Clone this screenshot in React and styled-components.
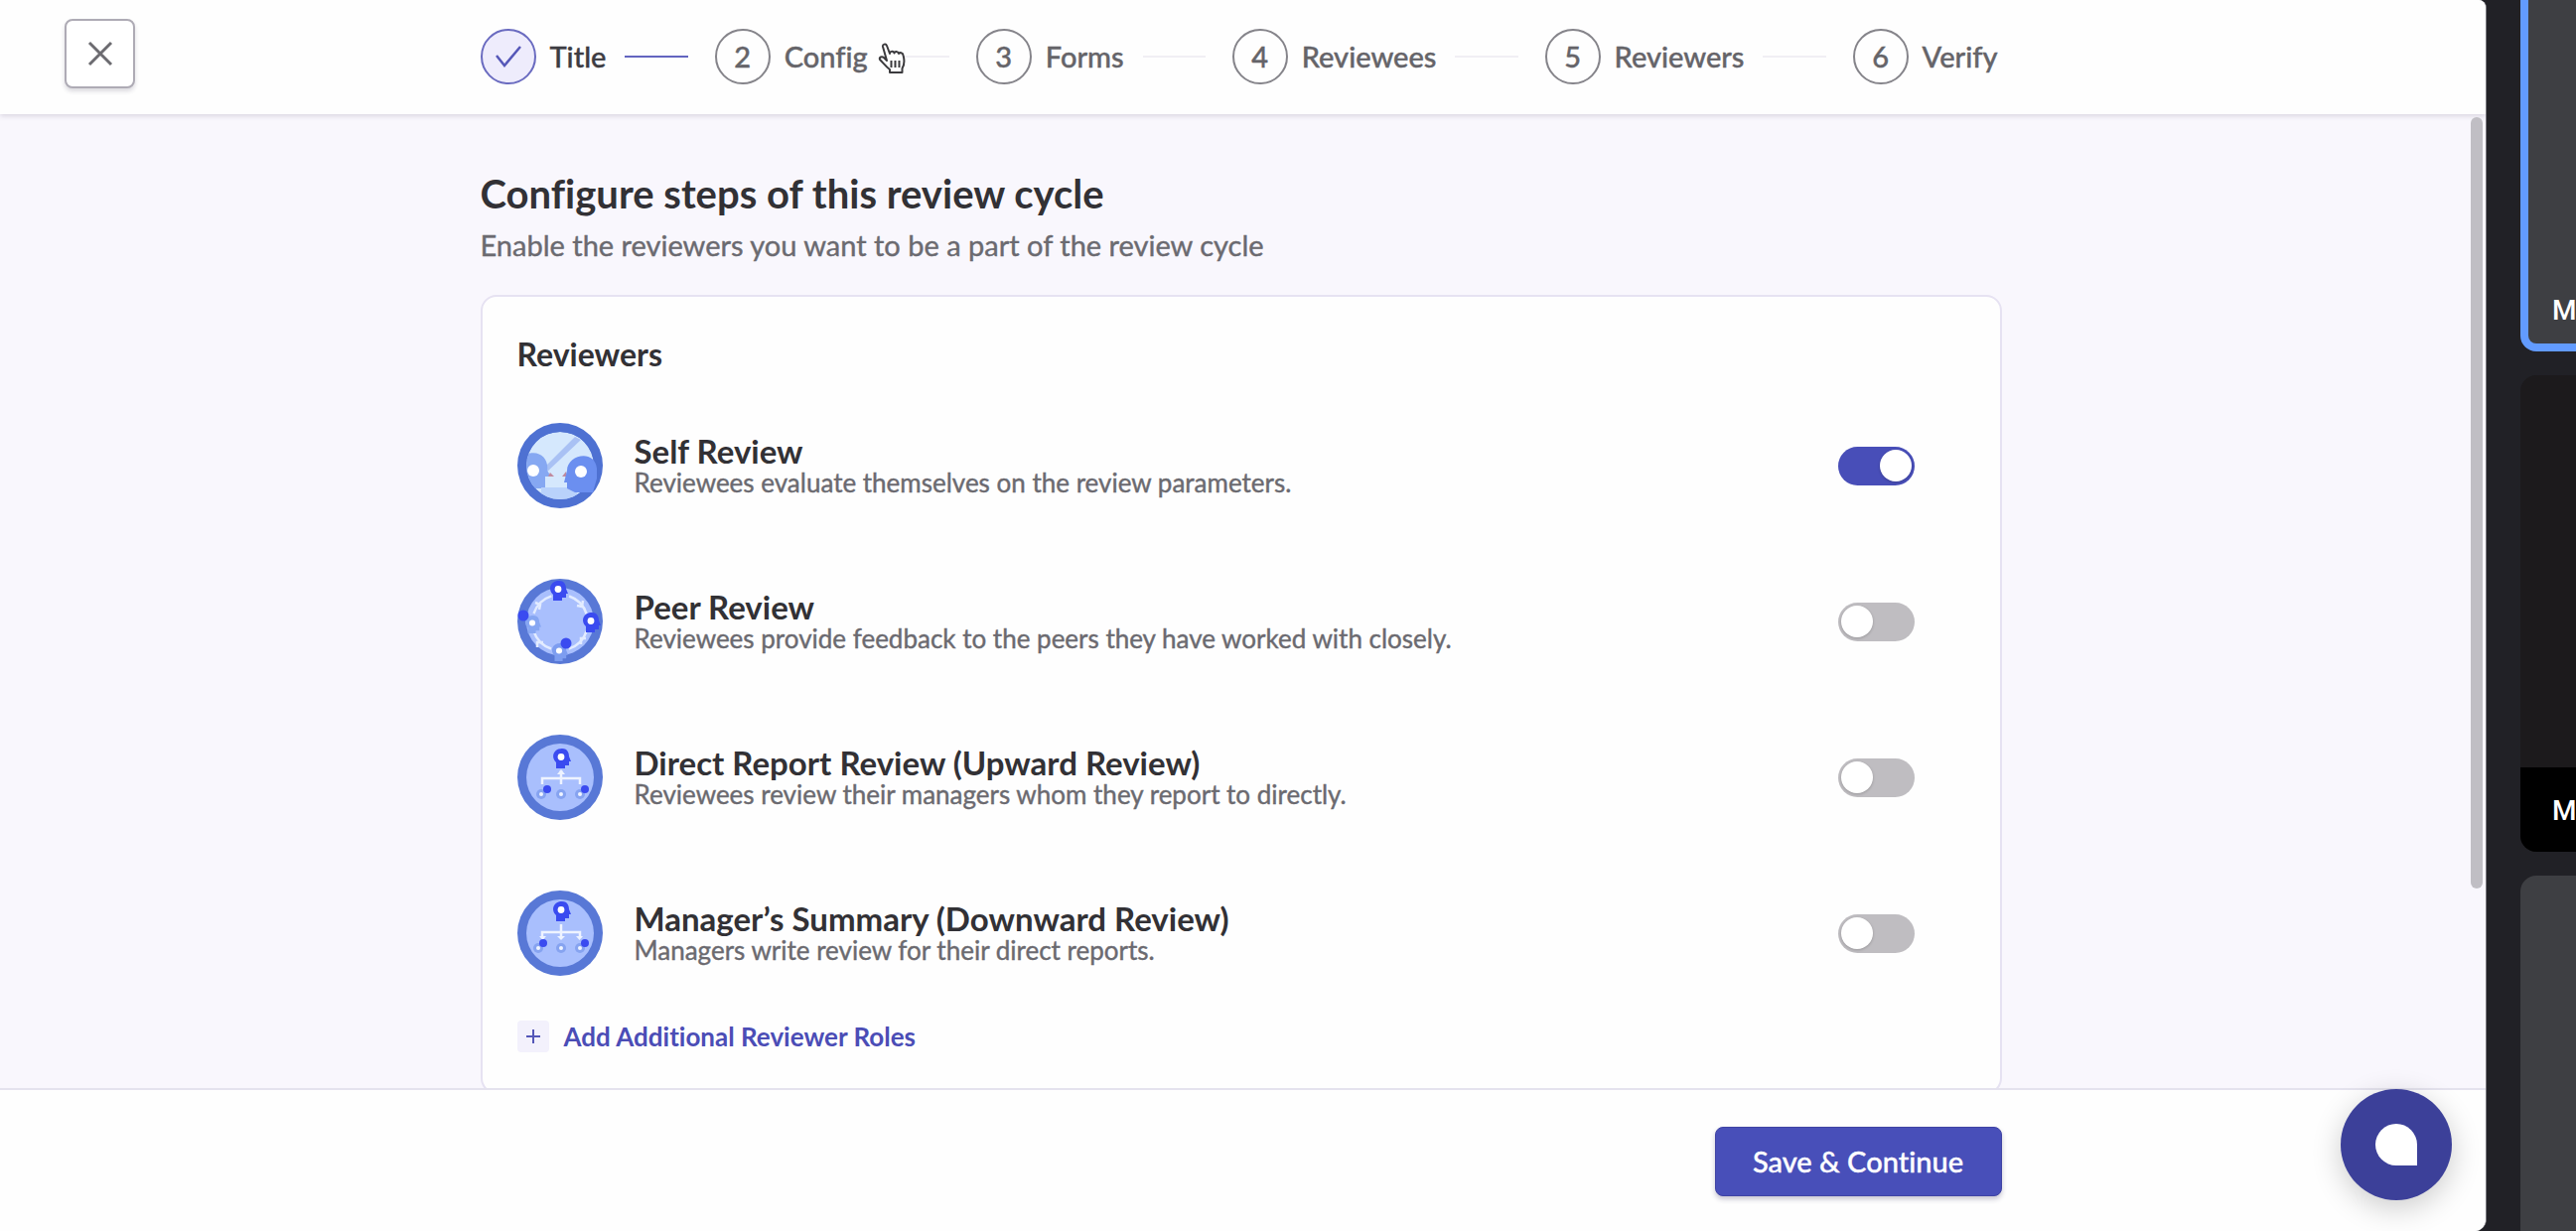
import React, { useState } from "react";
import styled, { createGlobalStyle } from "styled-components";

const GlobalStyle = createGlobalStyle`
  *, *::before, *::after { box-sizing: border-box; }
  body {
    margin: 0;
    overflow: hidden;
    background: #212126;
    font-family: Lato, "Open Sans", sans-serif;
    font-variant-ligatures: none;
    color: #323135;
  }
  button, input { font: inherit; font-variant-ligatures: none; }
  h1, h2, h3, p, ol, ul { margin: 0; padding: 0; }
`;

const Screen = styled.div`
  display: flex;
  height: 100vh;
  background: #212126;
`;

const Shared = styled.div`
  position: relative;
  flex: 1;
  min-width: 0;
  display: flex;
  flex-direction: column;
  overflow: hidden;
  background: #fefefe;
  border-right: 1px solid #77767c;
  border-radius: 0 8px 12px 0;
`;

const Column = styled.div`
  width: 100%;
  max-width: 1532px;
  margin: 0 auto;
`;

const Header = styled.header`
  position: relative;
  z-index: 1;
  flex: none;
  height: 115px;
  display: flex;
  align-items: center;
  padding: 0 4px 2px 0;
  background: #fefefe;
  box-shadow: 0 2px 5px rgba(60, 50, 80, 0.16);
`;

const CloseButton = styled.button`
  position: absolute;
  left: 65px;
  top: 19px;
  width: 71px;
  height: 70px;
  display: grid;
  place-items: center;
  padding: 0;
  background: #fff;
  border: 2px solid #aeabb5;
  border-radius: 8px;
  box-shadow: 0 3px 4px rgba(40, 30, 60, 0.16);
`;

const Steps = styled.ol`
  display: flex;
  padding-right: 4px;
  list-style: none;
`;

const StepItem = styled.li`
  position: relative;
  flex: ${(p) => (p.$last ? "none" : "1 1 auto")};
  display: flex;
  align-items: center;
  color: ${(p) => (p.$done ? "#3d3c42" : "#656469")};
  font-size: 29px;
  font-weight: 500;
  line-height: 36px;
  -webkit-text-stroke: 0.4px currentColor;
`;

const StepCircle = styled.span`
  flex: none;
  width: 56px;
  height: 56px;
  margin-right: 14px;
  display: grid;
  place-items: center;
  border: 2px solid ${(p) => (p.$done ? "#6a6bc0" : "#85848a")};
  border-radius: 50%;
  background: ${(p) => (p.$done ? "#eeecfc" : "transparent")};
`;

const Connector = styled.span`
  flex: 1;
  height: 2px;
  margin: 0 27px 0 19px;
  background: ${(p) => (p.$done ? "#6365c0" : "#f1eff4")};
`;

const Cursor = styled.svg`
  position: absolute;
  left: 164px;
  top: 14px;
  width: 28px;
  height: 32px;
`;

const Body = styled.main`
  flex: 1;
  min-height: 0;
  overflow: hidden;
  padding: 54px 4px 0 0;
  background: #f9f7fd;
`;

const PageTitle = styled.h1`
  font-size: 40px;
  font-weight: 700;
  line-height: 52px;
`;

const PageLead = styled.p`
  margin-top: 8px;
  font-size: 29px;
  line-height: 36px;
  color: #6b6a70;
  -webkit-text-stroke: 0.4px currentColor;
`;

const Card = styled.section`
  margin-top: 32px;
  padding: 38px 86px 40px 35px;
  background: #fefefe;
  border: 2px solid #e6e2f2;
  border-radius: 16px;
`;

const CardTitle = styled.h2`
  font-size: 32px;
  font-weight: 700;
  line-height: 40px;
`;

const RoleList = styled.ul`
  margin-top: 49px;
  display: grid;
  gap: 71px;
  list-style: none;
`;

const Role = styled.li`
  display: flex;
  align-items: center;
  height: 86px;
`;

const RoleIcon = styled.svg`
  flex: none;
  width: 86px;
  height: 86px;
  margin-right: 32px;
`;

const RoleText = styled.label`
  flex: 1;
`;

const RoleName = styled.h3`
  font-size: 33px;
  font-weight: 700;
  line-height: 34px;
`;

const RoleNote = styled.p`
  font-size: 26px;
  line-height: 30px;
  color: #6b6a70;
  -webkit-text-stroke: 0.4px currentColor;
`;

const Switch = styled.input`
  appearance: none;
  flex: none;
  width: 77px;
  height: 39px;
  margin: 0;
  padding: 3px;
  display: flex;
  justify-content: flex-start;
  border-radius: 20px;
  background: #bfbdc1;

  &::before {
    content: "";
    width: 32px;
    height: 32px;
    border-radius: 50%;
    background: #fff;
    box-shadow: 0 1px 3px rgba(0, 0, 0, 0.2);
  }

  &:checked {
    justify-content: flex-end;
    background: #484eb8;
  }
`;

const AddRole = styled.button`
  margin-top: 45px;
  padding: 0;
  display: flex;
  align-items: center;
  gap: 15px;
  border: 0;
  background: none;
  color: #4b4db6;
  font-size: 26px;
  font-weight: 700;
  line-height: 32px;
`;

const PlusBox = styled.span`
  width: 32px;
  height: 32px;
  display: grid;
  place-items: center;
  border-radius: 4px;
  background: #f3f1fc;
`;

const Footer = styled.footer`
  flex: none;
  height: 144px;
  padding: 2px 4px 0 0;
  display: flex;
  align-items: center;
  border-top: 2px solid #e4e2ee;
  background: #fefefe;
`;

const FooterRow = styled(Column)`
  display: flex;
  justify-content: flex-end;
`;

const SaveButton = styled.button`
  width: 289px;
  height: 70px;
  padding: 0;
  border: 1px solid #3f43a4;
  border-radius: 8px;
  background: #484fb9;
  color: #fff;
  font-size: 29px;
  font-weight: 500;
  line-height: 36px;
  -webkit-text-stroke: 0.4px currentColor;
  box-shadow: 0 3px 5px rgba(40, 30, 80, 0.25);
`;

const ScrollThumb = styled.div`
  position: absolute;
  z-index: 2;
  top: 118px;
  right: 3px;
  width: 12px;
  height: 777px;
  border-radius: 6px;
  background: #c0bec4;
`;

const ChatButton = styled.button`
  position: absolute;
  z-index: 2;
  right: 34px;
  bottom: 31px;
  width: 112px;
  height: 112px;
  padding: 0;
  display: grid;
  place-items: center;
  border: 0;
  border-radius: 50%;
  background: #3c4099;
  box-shadow: 0 8px 30px rgba(0, 0, 0, 0.2);
`;

const ChatMark = styled.span`
  width: 42px;
  height: 42px;
  border-radius: 50% 50% 0 50%;
  background: #fff;
`;

const CallPanel = styled.aside`
  flex: none;
  width: 90px;
  padding-left: 34px;
  display: flex;
  flex-direction: column;
  gap: 24px;
  overflow: hidden;
  color: #fff;
  font-family: Roboto, sans-serif;
  font-size: 28px;
  font-weight: 500;
  line-height: 32px;
`;

const Tile = styled.div`
  flex: none;
  width: 320px;
  height: ${(p) => p.$height}px;
  display: flex;
  flex-direction: column;
  justify-content: flex-end;
  overflow: hidden;
  background: ${(p) => (p.$dark ? "#1c1a1c" : "#3e3f43")};
  border: ${(p) => (p.$active ? "8px solid #629bff" : "0")};
  border-top: 0;
  border-radius: ${(p) => (p.$active ? "0 0 16px 16px" : "16px")};
`;

const TileName = styled.span`
  padding: ${(p) => (p.$bar ? "28px 32px 25px" : "0 24px 17px")};
  background: ${(p) => (p.$bar ? "#000" : "none")};
`;

const steps = ["Title", "Config", "Forms", "Reviewees", "Reviewers", "Verify"];

const Disc = ({ inner = "#a9bffd" }) => (
  <>
    <circle cx="43" cy="43" r="43" fill="#5878d6" />
    <circle cx="43" cy="43" r="34" fill={inner} />
  </>
);

const Head = ({ x, y, s = 1, fill = "#3a4bf0" }) => (
  <g transform={`translate(${x} ${y}) scale(${s})`}>
    <path
      d="M-5 11V5C-11-1-7-9 1-9C7-9 8-4 8-1L10 4H8V8H4V11Z"
      fill={fill}
    />
    <circle cx="0" cy="-0.5" r="3.4" fill="#fff" />
  </g>
);

function SelfIcon() {
  return (
    <RoleIcon viewBox="0 0 86 86" aria-hidden="true">
      <circle cx="43" cy="43" r="43" fill="#4e71d2" />
      <clipPath id="mirror">
        <circle cx="43" cy="43" r="34" />
      </clipPath>
      <g clipPath="url(#mirror)">
        <circle cx="43" cy="43" r="34" fill="#d5e8fd" />
        <path d="M58 14L22 50L27 52L64 17Z" fill="#a9c1f4" />
        <path d="M8 32C22 26 32 36 30 48L34 54H28V66H8Z" fill="#86a8f2" />
        <path d="M24 65H60V80H24Z" fill="#b9d2fb" />
        <path d="M33 50L37 54H31ZM49 49L45 54H50Z" fill="#c08a9e" />
      </g>
      <path d="M50 66V60H47L50 48C50 32 78 26 80 46V56L76 70H58Z" fill="#6b8ff0" />
      <circle cx="16" cy="48" r="6" fill="#fff" />
      <circle cx="64" cy="49" r="6" fill="#fff" />
    </RoleIcon>
  );
}

function PeerIcon() {
  return (
    <RoleIcon viewBox="0 0 86 86" aria-hidden="true">
      <Disc />
      <circle
        cx="43"
        cy="44"
        r="28"
        fill="none"
        stroke="#e3ecff"
        strokeWidth="2.5"
        strokeDasharray="26 18"
        strokeDashoffset="-9"
      />
      <path
        d="M18 24L23 26L22 31M60 27L65 28L66 22M64 66V60L69 60M26 64L20 64L20 69"
        fill="none"
        stroke="#e3ecff"
        strokeWidth="2.5"
      />
      <Head x={41} y={11} />
      <Head x={74} y={43} />
      <Head x={15} y={45} s={0.9} fill="#86a6f2" />
      <Head x={42} y={73} s={0.9} fill="#7d9df0" />
      <circle cx="6" cy="37" r="5.5" fill="#3a4bf0" />
      <circle cx="49" cy="65" r="5.5" fill="#3a4bf0" />
    </RoleIcon>
  );
}

function TreeIcon({ down }) {
  const y = down ? 58 : 60;
  return (
    <RoleIcon viewBox="0 0 86 86" aria-hidden="true">
      <Disc />
      <path
        d={`M25 ${y - 10}V${y - 16}H63V${y - 10}M44 ${y - 24}V${y - 10}`}
        fill="none"
        stroke="#eef3ff"
        strokeWidth="2.5"
      />
      {down ? (
        <path d="M22 46H29L25.500 50ZM40 46H48L44 50ZM59 46H66L62.500 50Z" fill="#eef3ff" />
      ) : (
        <path d="M40 40L44 35L48 40Z" fill="#eef3ff" />
      )}
      <Head x={44} y={down ? 20 : 23} />
      {[down ? 21 : 24, 44, 63].map((x) => (
        <g key={x}>
          <circle cx={x} cy={y} r="5" fill="#86a3f0" />
          <circle cx={x} cy={y} r="2" fill="#f0f5ff" />
        </g>
      ))}
      <circle cx={down ? 26 : 30} cy={y - 5} r="4" fill="#3a4bf0" />
      <circle cx="68" cy={y - 5} r="4" fill="#3a4bf0" />
    </RoleIcon>
  );
}

const roles = [
  {
    id: "self",
    name: "Self Review",
    note: "Reviewees evaluate themselves on the review parameters.",
    icon: <SelfIcon />,
  },
  {
    id: "peer",
    name: "Peer Review",
    note: "Reviewees provide feedback to the peers they have worked with closely.",
    icon: <PeerIcon />,
  },
  {
    id: "upward",
    name: "Direct Report Review (Upward Review)",
    note: "Reviewees review their managers whom they report to directly.",
    icon: <TreeIcon />,
  },
  {
    id: "downward",
    name: "Manager’s Summary (Downward Review)",
    note: "Managers write review for their direct reports.",
    icon: <TreeIcon down />,
  },
];

function HandCursor() {
  return (
    <Cursor viewBox="0 0 28 32" aria-hidden="true">
      <path
        d="M9 18L5 4C4.500 1.500 8 .5 9 3L12 11C12 8.500 15.500 8 16.500 10.500C17 8.500 20 8.500 21 11C22 9.500 25 10 25.500 12.500C27 18 27 22 24.500 26V30H12V27C8 24 5 20 2 17C1 14.500 4 13.500 6 15Z"
        fill="#fff"
        stroke="#3b3a3d"
        strokeWidth="2"
        strokeLinejoin="round"
      />
      <path d="M13.500 18V25M17.500 18V25M21.500 18V25" stroke="#3b3a3d" strokeWidth="2" />
    </Cursor>
  );
}

export default function App() {
  const [enabled, setEnabled] = useState({ self: true });
  const toggle = (id) => setEnabled((e) => ({ ...e, [id]: !e[id] }));

  return (
    <Screen>
      <GlobalStyle />
      <Shared>
        <Header>
          <CloseButton aria-label="Close">
            <svg width="26" height="26" viewBox="0 0 26 26" aria-hidden="true">
              <path d="M2 2L24 24M24 2L2 24" stroke="#6c6b70" strokeWidth="3" />
            </svg>
          </CloseButton>
          <Column>
            <Steps>
              {steps.map((name, i) => (
                <StepItem key={name} $done={i === 0} $last={i === steps.length - 1}>
                  <StepCircle $done={i === 0}>
                    {i === 0 ? (
                      <svg width="28" height="24" viewBox="0 0 28 24" aria-hidden="true">
                        <path
                          d="M2 11L10 21L26 2"
                          fill="none"
                          stroke="#5557b8"
                          strokeWidth="2.500"
                        />
                      </svg>
                    ) : (
                      i + 1
                    )}
                  </StepCircle>
                  {name}
                  {i < steps.length - 1 && <Connector $done={i === 0} />}
                  {i === 1 && <HandCursor />}
                </StepItem>
              ))}
            </Steps>
          </Column>
        </Header>

        <Body>
          <Column>
            <PageTitle>Configure steps of this review cycle</PageTitle>
            <PageLead>Enable the reviewers you want to be a part of the review cycle</PageLead>
            <Card>
              <CardTitle>Reviewers</CardTitle>
              <RoleList>
                {roles.map((role) => (
                  <Role key={role.id}>
                    {role.icon}
                    <RoleText htmlFor={role.id}>
                      <RoleName>{role.name}</RoleName>
                      <RoleNote>{role.note}</RoleNote>
                    </RoleText>
                    <Switch
                      id={role.id}
                      type="checkbox"
                      role="switch"
                      checked={!!enabled[role.id]}
                      onChange={() => toggle(role.id)}
                    />
                  </Role>
                ))}
              </RoleList>
              <AddRole>
                <PlusBox>
                  <svg width="16" height="16" viewBox="0 0 16 16" aria-hidden="true">
                    <path d="M8 1V15M1 8H15" stroke="#5557b8" strokeWidth="2" />
                  </svg>
                </PlusBox>
                Add Additional Reviewer Roles
              </AddRole>
            </Card>
          </Column>
        </Body>

        <Footer>
          <FooterRow>
            <SaveButton>Save &amp; Continue</SaveButton>
          </FooterRow>
        </Footer>

        <ScrollThumb />
        <ChatButton aria-label="Open chat">
          <ChatMark />
        </ChatButton>
      </Shared>

      <CallPanel>
        <Tile $height={354} $active>
          <TileName>M</TileName>
        </Tile>
        <Tile $height={480} $dark>
          <TileName $bar>M</TileName>
        </Tile>
        <Tile $height={480} />
      </CallPanel>
    </Screen>
  );
}
